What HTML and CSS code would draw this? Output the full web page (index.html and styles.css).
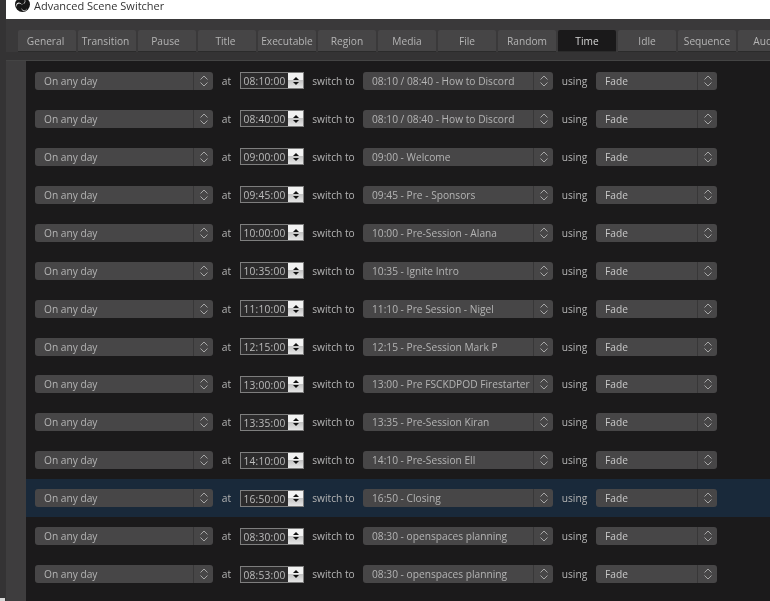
FILE: index.html
```html
<!DOCTYPE html>
<html lang="en">
<head>
    <meta charset="UTF-8">
    <meta name="viewport" content="width=device-width, initial-scale=1.0">
    <title>Advanced Scene Switcher</title>
    <link rel="stylesheet" href="styles.css">
</head>
<body>
    <div class="strip"><div class="strip-corner"></div></div>
    <div class="window">
        <div class="titlebar">
            <svg class="logo" viewBox="0 0 16 16" width="15" height="15">
                <circle cx="8" cy="8" r="8" fill="#161616"/>
                <path d="M8 1.6 A3 3 0 1 1 7 7.4 A2.2 2.2 0 0 0 8 1.6 Z" fill="#fff"/>
                <path d="M2 11 A3 3 0 1 1 7.2 8.6 A2.2 2.2 0 0 0 2 11 Z" fill="#fff"/>
                <path d="M12.8 12 A3 3 0 0 1 7 11.6 A2.2 2.2 0 0 0 12.8 12 Z" fill="#fff"/>
            </svg>
            <span class="title-text">Advanced Scene Switcher</span>
        </div>
        <div class="tabs">
            <div class="tab tab-early">General</div>
            <div class="tab tab-early">Transition</div>
            <div class="tab tab-early">Pause</div>
            <div class="tab tab-early">Title</div>
            <div class="tab">Executable</div>
            <div class="tab">Region</div>
            <div class="tab">Media</div>
            <div class="tab">File</div>
            <div class="tab">Random</div>
            <div class="tab active">Time</div>
            <div class="tab">Idle</div>
            <div class="tab">Sequence</div>
            <div class="tab">Audio</div>
        </div>
        <div class="panel" id="rows"></div>
    </div>
    <script>
        const rows = [
            ['08:10:00', '08:10 / 08:40 - How to Discord'],
            ['08:40:00', '08:10 / 08:40 - How to Discord'],
            ['09:00:00', '09:00 - Welcome'],
            ['09:45:00', '09:45 - Pre - Sponsors'],
            ['10:00:00', '10:00 - Pre-Session - Alana'],
            ['10:35:00', '10:35 - Ignite Intro'],
            ['11:10:00', '11:10 - Pre Session - Nigel'],
            ['12:15:00', '12:15 - Pre-Session Mark P'],
            ['13:00:00', '13:00 - Pre FSCKDPOD Firestarter'],
            ['13:35:00', '13:35 - Pre-Session Kiran'],
            ['14:10:00', '14:10 - Pre-Session Ell'],
            ['16:50:00', '16:50 - Closing'],
            ['08:30:00', '08:30 - openspaces planning'],
            ['08:53:00', '08:30 - openspaces planning']
        ];

        // same little up/down chevrons on every combo box
        const chevrons = '<span class="arrows"><svg viewBox="0 0 10 14" width="10" height="14"><path d="M1.5 5.5 L5 2 L8.5 5.5 M1.5 8.5 L5 12 L8.5 8.5" fill="none" stroke="#a6a6a6" stroke-width="1"/></svg></span>';

        function combo(cls, text) {
            return `<div class="combo ${cls}"><span class="combo-text">${text}</span>${chevrons}</div>`;
        }

        document.getElementById('rows').innerHTML = rows.map((r, i) => `
            <div class="row${i === 11 ? ' selected' : ''}">
                ${combo('combo-day', 'On any day')}
                <span class="lbl lbl-at">at</span>
                <div class="timebox">
                    <span class="time-text">${r[0]}</span>
                    <span class="spin"><i class="up"></i><i class="down"></i></span>
                </div>
                <span class="lbl lbl-switch">switch to</span>
                ${combo('combo-scene', r[1])}
                <span class="lbl lbl-using">using</span>
                ${combo('combo-fade', 'Fade')}
            </div>`).join('');
    </script>
</body>
</html>
```

FILE: styles.css
```css
html, body {
    margin: 0;
    padding: 0;
    width: 770px;
    height: 601px;
    overflow: hidden;
}

body {
    display: flex;
    background-color: #2f2f2f;
    font-family: "Open Sans", "Noto Sans", sans-serif;
    font-size: 10.2px;
    color: #bcbcbc;
}

.strip {
    width: 6px;
    flex: none;
    display: flex;
    flex-direction: column;
    justify-content: flex-end;
    background-color: #343334;
}

.strip-corner {
    width: 5px;
    height: 3px;
    background-color: #d8d8d8;
}

.window {
    flex: 1;
    min-width: 0;
    display: flex;
    flex-direction: column;
    background-color: #3e3d3e;
    filter: blur(0.35px);
}

.titlebar {
    height: 19px;
    flex: none;
    display: flex;
    align-items: flex-start;
    padding-left: 9px;
    background-color: #fff;
    color: #333;
    font-size: 11px;
}

.logo {
    flex: none;
    margin-top: -3px;
}

.title-text {
    margin-left: 4px;
    line-height: 14px;
    margin-top: -1px;
}

.tabs {
    display: flex;
    gap: 2px;
    height: 22px;
    flex: none;
    padding: 11px 0 8px 12px;
    background: linear-gradient(#3a393a 0, #3a393a 33px, #343334 33px);
    border-bottom: 1px solid #444;
    overflow: hidden;
}

.tab {
    width: 58px;
    flex: none;
    box-sizing: border-box;
    display: flex;
    align-items: center;
    justify-content: center;
    background-color: #464546;
    border-bottom: 1px solid #2b2b2b;
    border-radius: 2px 2px 0 0;
    color: #b4b4b4;
    white-space: nowrap;
}

.tab-early {
    padding-right: 3px;
}

.tab.active {
    background-color: #1a191a;
    color: #d6d6d6;
}

.panel {
    flex: 1;
    margin-left: 20px;
    padding-top: 1px;
    background-color: #1b1a1b;
}

.row {
    height: 37.95px;
    display: flex;
    align-items: center;
    padding-left: 9px;
}

.row.selected {
    background-color: #19293a;
}

.combo {
    height: 18px;
    box-sizing: border-box;
    flex: none;
    display: flex;
    background-color: #474647;
    border-radius: 3px;
    color: #b4b4b4;
}

.combo-day {
    width: 178px;
}

.combo-scene {
    width: 190px;
}

.combo-fade {
    width: 121px;
}

.combo-fade .combo-text {
    color: #c8c8c8;
}

.combo-text {
    flex: 1;
    min-width: 0;
    padding-left: 9px;
    line-height: 19px;
    white-space: nowrap;
    overflow: hidden;
}

.arrows {
    width: 20px;
    box-sizing: border-box;
    flex: none;
    display: flex;
    align-items: center;
    justify-content: center;
    border-left: 1px solid #383738;
}

.lbl {
    flex: none;
    color: #b4b4b4;
}

.lbl-at {
    width: 27px;
    text-align: center;
}

.lbl-switch {
    width: 59px;
    text-align: center;
}

.lbl-using {
    width: 43px;
    text-align: center;
}

.timebox {
    width: 64px;
    height: 17px;
    box-sizing: border-box;
    flex: none;
    display: flex;
    border: 1px solid #7e7e7e;
    background-color: #2c2b2c;
}

.time-text {
    flex: 1;
    text-align: center;
    line-height: 16px;
    letter-spacing: 0.2px;
    color: #bcbcbc;
}

.spin {
    width: 15px;
    flex: none;
    display: flex;
    flex-direction: column;
    align-items: center;
    justify-content: center;
    gap: 2px;
    background: linear-gradient(#f2f2f2 0, #f2f2f2 49%, #c4c4c4 50%, #e6e6e6 100%);
}

.spin i {
    width: 0;
    height: 0;
    border-left: 3px solid transparent;
    border-right: 3px solid transparent;
}

.spin .up {
    border-bottom: 3px solid #111;
}

.spin .down {
    border-top: 3px solid #111;
}
```
